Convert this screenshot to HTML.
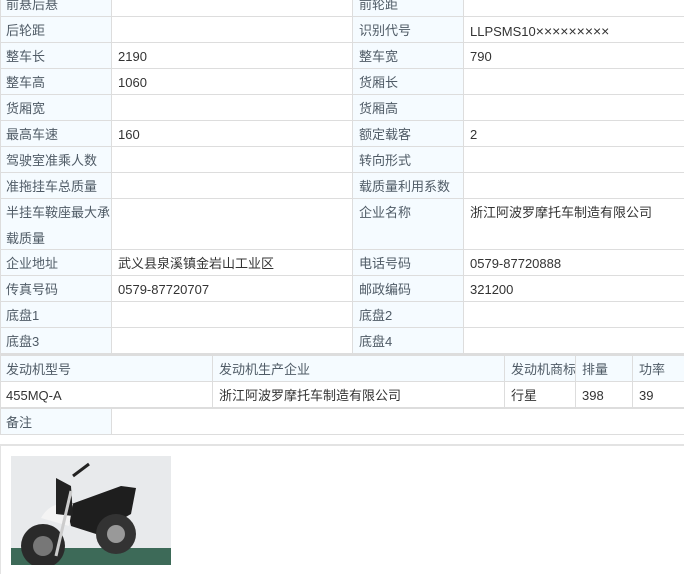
<!DOCTYPE html>
<html><head><meta charset="utf-8"><style>
*{margin:0;padding:0;box-sizing:border-box}
body{width:684px;height:565px;overflow:hidden;background:#fff;position:relative;font-family:"Liberation Sans","Noto Sans CJK SC",sans-serif;font-size:13px;color:#333}
.c{position:absolute;border-right:1px solid #ddd;border-bottom:1px solid #ddd;line-height:26px;padding-left:6px;padding-top:1px;white-space:nowrap;overflow:hidden}
.l{background:#f5fbff;color:#4f5b66}
.x{font-size:14px}
</style></head><body>
<div id="w"></div>
<div style="position:absolute;left:0;top:444px;width:684px;height:130px;border-top:2px solid #e3e3e3;border-left:1px solid #e3e3e3"></div>
<svg style="position:absolute;left:11px;top:456px" width="160" height="109" viewBox="0 0 160 109">
<rect width="160" height="109" fill="#e8eaec"/>
<rect y="92" width="160" height="17" fill="#3d6a58"/>
<path d="M55 50 L110 30 L125 32 L120 58 L85 78 L60 70 Z" fill="#1e1e1e"/>
<path d="M30 62 Q40 44 62 48 L58 70 Z" fill="#f4f4f4"/>
<path d="M45 22 L60 30 L62 60 L45 58 Z" fill="#222"/>
<circle cx="32" cy="90" r="22" fill="#2a2a2a"/><circle cx="32" cy="90" r="10" fill="#777"/>
<circle cx="105" cy="78" r="20" fill="#333"/><circle cx="105" cy="78" r="9" fill="#999"/>
<path d="M45 100 L60 35" stroke="#ccc" stroke-width="3"/>
<path d="M62 20 L78 8" stroke="#222" stroke-width="3"/>
</svg>
<script>
var w=document.getElementById('w'),h='';
function c(x,y,ww,hh,t,l,s){h+='<div class="c'+(l?' l':'')+'" style="left:'+x+'px;top:'+y+'px;width:'+ww+'px;height:'+hh+'px;'+(s||'')+'">'+t+'</div>';}
var rows=[[-9,26,'前悬后悬','','前轮距',''],[17,26,'后轮距','','识别代号','LLPSMS10<span class="x">×××××××××</span>'],[43,26,'整车长','2190','整车宽','790'],[69,26,'整车高','1060','货厢长',''],[95,26,'货厢宽','','货厢高',''],[121,26,'最高车速','160','额定载客','2'],[147,26,'驾驶室准乘人数','','转向形式',''],[173,26,'准拖挂车总质量','','载质量利用系数',''],[199,51,'半挂车鞍座最大承<br>载质量','','企业名称','浙江阿波罗摩托车制造有限公司'],[250,26,'企业地址','武义县泉溪镇金岩山工业区','电话号码','0579-87720888'],[276,26,'传真号码','0579-87720707','邮政编码','321200'],[302,26,'底盘1','','底盘2',''],[328,26,'底盘3','','底盘4','']];
rows.forEach(function(r){var s='white-space:normal;';c(0,r[0],112,r[1],r[2],1,s);c(112,r[0],241,r[1],r[3],0,s);c(353,r[0],111,r[1],r[4],1,s);c(464,r[0],230,r[1],r[5],0,s);});
h+='<div style="position:absolute;left:0;top:354px;width:684px;height:2px;background:#ddd"></div>';
var cx=[0,213,505,576,633,700],hd=['发动机型号','发动机生产企业','发动机商标','排量','功率'],dv=['455MQ-A','浙江阿波罗摩托车制造有限公司','行星','398','39'];
for(var i=0;i<5;i++){c(cx[i],356,cx[i+1]-cx[i],26,hd[i],1);c(cx[i],382,cx[i+1]-cx[i],26,dv[i],0);}
h+='<div style="position:absolute;left:0;top:407px;width:684px;height:2px;background:#ddd"></div>';
c(0,409,112,26,'备注',1);c(112,409,600,26,'',0);
h+='<div style="position:absolute;left:0;top:-9px;width:1px;height:444px;background:#ddd"></div>';
w.innerHTML=h;
</script>
</body></html>
